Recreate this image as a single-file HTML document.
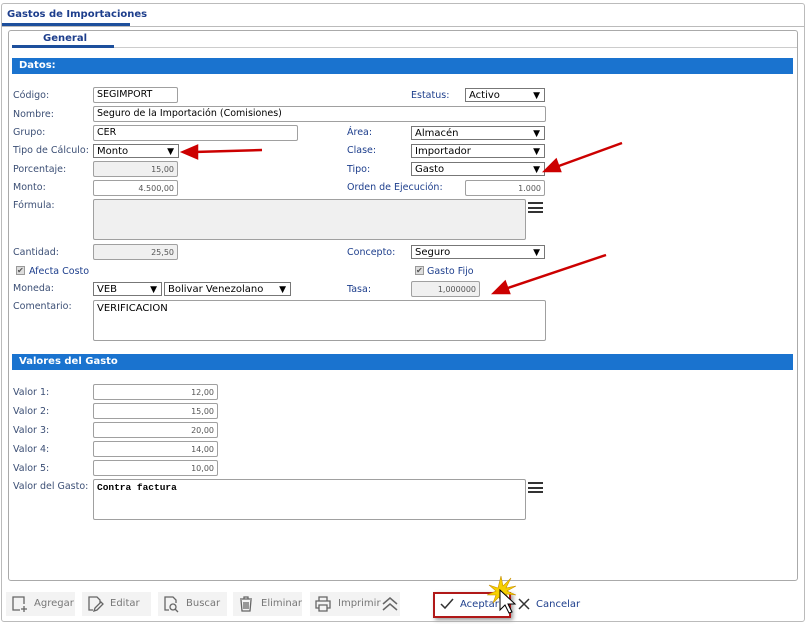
<!DOCTYPE html>
<html><head><meta charset="utf-8"><style>
*{box-sizing:border-box;margin:0;padding:0}
body{width:807px;height:624px;background:#fff;position:relative;overflow:hidden;font-family:"DejaVu Sans","Liberation Sans",sans-serif;font-size:9.5px;color:#000}
.a{position:absolute}
.l{position:absolute;color:#3c4f75;font-size:9.5px;white-space:nowrap}
.r{color:#1d3e8c}
.in{position:absolute;height:16px;border:1px solid #a0a0a0;border-radius:2px;background:#fff;font-size:9.5px;padding:1px 3px;white-space:nowrap;overflow:hidden}
.num{text-align:right;font-size:8px;color:#555;padding-top:3px}
.sel{position:absolute;height:14px;border:1px solid #777;background:#fff;font-size:10px;padding:0 3px;line-height:14px;white-space:nowrap}
.sel:after{content:"▼";position:absolute;right:4px;top:0;font-size:9px}
.ta{position:absolute;border:1px solid #a0a0a0;border-radius:2px;background:#fff;padding:2px 3px;font-size:10px}
.dis{background:#f0f0f0 !important}
.bar{position:absolute;left:12px;width:781px;height:16px;background:#1a73cf;color:#fff;font-weight:bold;font-size:10px;padding:2px 7px}
.ham{position:absolute;width:15px;height:11px;border-top:2px solid #333;border-bottom:2px solid #333}
.ham:after{content:"";position:absolute;left:0;right:0;top:2.5px;border-top:2px solid #333}
.btn{position:absolute;top:592px;height:24px;background:#f3f3f3;color:#777;font-size:10px;line-height:24px;padding-left:28px}
.btn svg{position:absolute;left:4px;top:3px}
</style></head><body>
<div class="a" style="left:1px;top:3px;width:804px;height:619px;border:1px solid #bbb;border-radius:3px"></div>
<div class="a" style="left:7px;top:9px;font-weight:bold;font-size:10px;color:#1d3e8c">Gastos de Importaciones</div>
<div class="a" style="left:2px;top:23px;width:128px;height:3px;background:#1d4f9c"></div>
<div class="a" style="left:1px;top:26px;width:804px;border-top:1px solid #bbb"></div>
<div class="a" style="left:8px;top:30px;width:790px;height:551px;border:1px solid #aaa;border-radius:3px"></div>
<div class="a" style="left:43px;top:33px;font-weight:bold;font-size:10px;color:#1d3e8c">General</div>
<div class="a" style="left:12px;top:45px;width:102px;height:3px;background:#1d4f9c"></div>
<div class="a" style="left:114px;top:47px;width:683px;border-top:1px solid #ccc"></div>
<div class="bar" style="top:58px">Datos:</div>

<div class="l" style="left:13px;top:90px">Código:</div><div class="in" style="left:93px;top:87px;width:85px">SEGIMPORT</div>
<div class="l r" style="left:411px;top:90px">Estatus:</div><div class="sel" style="left:465px;top:88px;width:80px">Activo</div>
<div class="l" style="left:13px;top:109px">Nombre:</div><div class="in" style="left:93px;top:106px;width:453px">Seguro de la Importación (Comisiones)</div>
<div class="l" style="left:13px;top:127px">Grupo:</div><div class="in" style="left:93px;top:125px;width:205px">CER</div>
<div class="l r" style="left:347px;top:127px">Área:</div><div class="sel" style="left:411px;top:126px;width:134px">Almacén</div>
<div class="l" style="left:13px;top:145px">Tipo de Cálculo:</div><div class="sel" style="left:93px;top:144px;width:86px">Monto</div>
<div class="l r" style="left:347px;top:145px">Clase:</div><div class="sel" style="left:411px;top:144px;width:134px">Importador</div>
<div class="l" style="left:13px;top:164px">Porcentaje:</div><div class="in num dis" style="left:93px;top:161px;width:85px">15,00</div>
<div class="l r" style="left:347px;top:164px">Tipo:</div><div class="sel" style="left:411px;top:162px;width:134px">Gasto</div>
<div class="l" style="left:13px;top:182px">Monto:</div><div class="in num" style="left:93px;top:180px;width:85px">4.500,00</div>
<div class="l r" style="left:347px;top:182px">Orden de Ejecución:</div><div class="in num" style="left:465px;top:180px;width:80px">1.000</div>
<div class="l" style="left:13px;top:200px">Fórmula:</div><div class="ta dis" style="left:93px;top:199px;width:433px;height:41px"></div><div class="ham" style="left:528px;top:202px"></div>
<div class="l" style="left:13px;top:247px">Cantidad:</div><div class="in num dis" style="left:93px;top:244px;width:85px">25,50</div>
<div class="l r" style="left:347px;top:247px">Concepto:</div><div class="sel" style="left:411px;top:245px;width:134px">Seguro</div>
<div class="a" style="left:16px;top:266px;width:9px;height:9px;background:#ddd;border:1px solid #999;font-size:8px;line-height:7px;color:#555">✔</div><div class="l r" style="left:29px;top:266px">Afecta Costo</div>
<div class="a" style="left:415px;top:266px;width:9px;height:9px;background:#ddd;border:1px solid #999;font-size:8px;line-height:7px;color:#555">✔</div><div class="l r" style="left:427px;top:266px">Gasto Fijo</div>
<div class="l" style="left:13px;top:283px">Moneda:</div><div class="sel" style="left:93px;top:282px;width:69px">VEB</div><div class="sel" style="left:164px;top:282px;width:127px">Bolivar Venezolano</div>
<div class="l r" style="left:347px;top:284px">Tasa:</div><div class="in num dis" style="left:411px;top:281px;width:69px">1,000000</div>
<div class="l" style="left:13px;top:301px">Comentario:</div><div class="ta" style="left:93px;top:300px;width:453px;height:41px">VERIFICACION</div>

<div class="bar" style="top:354px">Valores del Gasto</div>
<div class="l" style="left:13px;top:387px">Valor 1:</div><div class="in num" style="left:93px;top:384px;width:125px">12,00</div>
<div class="l" style="left:13px;top:406px">Valor 2:</div><div class="in num" style="left:93px;top:403px;width:125px">15,00</div>
<div class="l" style="left:13px;top:425px">Valor 3:</div><div class="in num" style="left:93px;top:422px;width:125px">20,00</div>
<div class="l" style="left:13px;top:444px">Valor 4:</div><div class="in num" style="left:93px;top:441px;width:125px">14,00</div>
<div class="l" style="left:13px;top:463px">Valor 5:</div><div class="in num" style="left:93px;top:460px;width:125px">10,00</div>
<div class="l" style="left:13px;top:481px">Valor del Gasto:</div><div class="ta" style="left:93px;top:479px;width:433px;height:41px;font-family:'Liberation Mono',monospace;font-size:9.5px;font-weight:bold">Contra factura</div><div class="ham" style="left:528px;top:482px"></div>

<div class="btn" style="left:6px;width:69px"><svg width="20" height="18" viewBox="0 0 20 18" fill="none" stroke="#666" stroke-width="1.3"><path d="M10 15H3V2h11v7M14 11v6M11 14h6"/></svg>Agregar</div>
<div class="btn" style="left:82px;width:69px"><svg width="20" height="18" viewBox="0 0 20 18" fill="none" stroke="#666" stroke-width="1.3"><path d="M7 15H3V2h8l3 3v3M8 16l1-3 6-6 2 2-6 6z"/></svg>Editar</div>
<div class="btn" style="left:158px;width:69px"><svg width="20" height="18" viewBox="0 0 20 18" fill="none" stroke="#666" stroke-width="1.3"><path d="M7 15H3V2h8l3 3v3"/><circle cx="11" cy="12" r="3"/><path d="M13 14l3 3"/></svg>Buscar</div>
<div class="btn" style="left:233px;width:69px"><svg width="20" height="18" viewBox="0 0 20 18" fill="none" stroke="#666" stroke-width="1.3"><path d="M3 4h12M7 4V2h4v2M4 5l1 11h8l1-11M7 7v7M9 7v7M11 7v7"/></svg>Eliminar</div>
<div class="btn" style="left:310px;width:90px"><svg width="20" height="18" viewBox="0 0 20 18" fill="none" stroke="#666" stroke-width="1.3"><path d="M5 6V2h8v4M5 13H2V6h14v7h-3M5 10h8v6H5z"/></svg>Imprimir<svg style="left:71px" width="18" height="18" viewBox="0 0 18 18" fill="none" stroke="#666" stroke-width="1.5"><path d="M2 9l7-6 7 6M2 15l7-6 7 6"/></svg></div>

<div class="a" style="left:433px;top:592px;width:78px;height:26px;border:2px solid #b01818;box-shadow:2px 2px 4px #999"></div>
<svg class="a" style="left:439px;top:597px" width="16" height="14" viewBox="0 0 16 14" fill="none" stroke="#333" stroke-width="1.5"><path d="M2 7l4 4 8-9"/></svg>
<div class="a" style="left:460px;top:599px;color:#1d3e8c;font-size:10px">Aceptar</div>
<svg class="a" style="left:517px;top:597px" width="14" height="14" viewBox="0 0 14 14" stroke="#333" stroke-width="1.5"><path d="M2 2l10 10M12 2L2 12"/></svg>
<div class="a" style="left:536px;top:599px;color:#1d3e8c;font-size:10px">Cancelar</div>
<svg class="a" style="left:485px;top:574px" width="36" height="42" viewBox="0 0 36 42"><path d="M16 2l2 10 8-8-5 10 10-2-9 5 9 4-10-1 5 8-8-6-1 10-3-9-6 6 3-8-9 0 9-4-7-6 9 3z" fill="#f6d000" stroke="#c89000" stroke-width=".6"/><path d="M15 16v20l5-5 4 8 3-1-4-8h7z" fill="#fff" stroke="#000"/></svg>

<svg class="a" style="left:0;top:0" width="807" height="624">
<g stroke="#c00" stroke-width="2.5" fill="#c00"><path d="M262 150L194 152" /><path d="M183 152l14-6v12z"/>
<path d="M622 143L556 167"/><path d="M545 171l11-11 4 11z"/>
<path d="M606 255L505 289"/><path d="M494 293l11-11 4 11z"/></g></svg>
</body></html>
